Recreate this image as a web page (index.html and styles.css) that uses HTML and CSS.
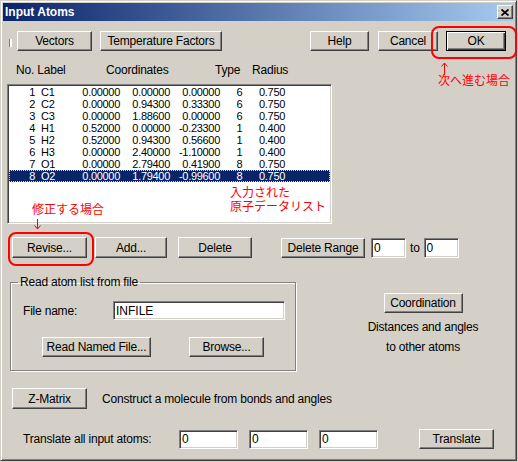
FILE: index.html
```html
<!DOCTYPE html>
<html lang="en">
<head>
    <meta charset="UTF-8">
    <title>Input Atoms</title>
    <link rel="stylesheet" href="styles.css">
</head>
<body>
<div class="window">
    <div class="titlebar">
        <span class="title">Input Atoms</span>
        <button class="close-btn">
            <svg width="8" height="7" viewBox="0 0 8 7"><path d="M0.5 0.5 L7.5 6.5 M7.5 0.5 L0.5 6.5" stroke="#000" stroke-width="1.7" fill="none"/></svg>
        </button>
    </div>

    <div class="toolbar">
        <span class="grip"></span>
        <button class="btn btn-vectors">Vectors</button>
        <button class="btn btn-temp">Temperature Factors</button>
        <button class="btn btn-help">Help</button>
        <button class="btn btn-cancel">Cancel</button>
        <button class="btn btn-ok">OK</button>
    </div>

    <div class="list-head">
        <span>No. Label</span>
        <span>Coordinates</span>
        <span>Type</span>
        <span>Radius</span>
    </div>

    <div class="listbox">
        <div class="atom-row"><span>1</span><span>C1</span><span>0.00000</span><span>0.00000</span><span>0.00000</span><span>6</span><span>0.750</span></div>
        <div class="atom-row"><span>2</span><span>C2</span><span>0.00000</span><span>0.94300</span><span>0.33300</span><span>6</span><span>0.750</span></div>
        <div class="atom-row"><span>3</span><span>C3</span><span>0.00000</span><span>1.88600</span><span>0.00000</span><span>6</span><span>0.750</span></div>
        <div class="atom-row"><span>4</span><span>H1</span><span>0.52000</span><span>0.00000</span><span>-0.23300</span><span>1</span><span>0.400</span></div>
        <div class="atom-row"><span>5</span><span>H2</span><span>0.52000</span><span>0.94300</span><span>0.56600</span><span>1</span><span>0.400</span></div>
        <div class="atom-row"><span>6</span><span>H3</span><span>0.00000</span><span>2.40000</span><span>-1.10000</span><span>1</span><span>0.400</span></div>
        <div class="atom-row"><span>7</span><span>O1</span><span>0.00000</span><span>2.79400</span><span>0.41900</span><span>8</span><span>0.750</span></div>
        <div class="atom-row selected"><span>8</span><span>O2</span><span>0.00000</span><span>1.79400</span><span>-0.99600</span><span>8</span><span>0.750</span></div>
    </div>

    <div class="edit-row">
        <button class="btn btn-revise">Revise...</button>
        <button class="btn btn-add">Add...</button>
        <button class="btn btn-delete">Delete</button>
        <button class="btn btn-range">Delete Range</button>
        <input class="field range-field" value="0">
        <span class="to-label">to</span>
        <input class="field range-field" value="0">
    </div>

    <div class="lower">
        <fieldset class="group">
            <legend>Read atom list from file</legend>
            <div class="file-row">
                <span class="file-label">File name:</span>
                <input class="field file-field" value="INFILE">
            </div>
            <div class="read-row">
                <button class="btn btn-read">Read Named File...</button>
                <button class="btn btn-browse">Browse...</button>
            </div>
        </fieldset>
        <div class="coord">
            <button class="btn btn-coord">Coordination</button>
            <div class="coord-text">Distances and angles</div>
            <div class="coord-text">to other atoms</div>
        </div>
    </div>

    <div class="z-row">
        <button class="btn btn-z">Z-Matrix</button>
        <span class="z-text">Construct a molecule from bonds and angles</span>
    </div>

    <div class="t-row">
        <span class="t-label">Translate all input atoms:</span>
        <input class="field t-field" value="0">
        <input class="field t-field" value="0">
        <input class="field t-field" value="0">
        <button class="btn btn-translate">Translate</button>
    </div>

    <!-- red notes drawn over the dialog -->
    <div class="note-ring ring-ok"></div>
    <div class="note-ring ring-revise"></div>
    <svg class="arrow arrow-up" width="7" height="13" viewBox="0 0 7 13"><path d="M3.5 1 V13 M0.5 4.5 L3.5 1 L6.5 4.5" stroke="#ff0000" stroke-width="1" fill="none"/></svg>
    <div class="note note-ok">次へ進む場合</div>
    <div class="note note-list">入力された<br>原子データリスト</div>
    <div class="note note-revise">修正する場合</div>
    <svg class="arrow arrow-down" width="7" height="11" viewBox="0 0 7 11"><path d="M3.5 0 V10 M0.5 6.5 L3.5 10 L6.5 6.5" stroke="#ff0000" stroke-width="1" fill="none"/></svg>
</div>
</body>
</html>
```

FILE: styles.css
```css
body{
    margin:0;
    background-color:#d4d0c8;
    font-family:"Liberation Sans", Arial, sans-serif;
    font-size:12px;
    letter-spacing:-0.2px;
    color:#000;
}
.window{
    position:relative;
    width:517px;
    height:461px;
    box-sizing:border-box;
    border:1px solid;
    border-color:#d4d0c8 #404040 #404040 #d4d0c8;
    box-shadow:inset 1px 1px #fff, inset -1px -1px #808080;
    padding:2px;
    background-color:#d4d0c8;
}
.titlebar{
    height:18px;
    display:flex;
    align-items:center;
    background:linear-gradient(to right, #0a246a, #a6caf0);
}
.title{
    color:white;
    font-weight:bold;
    letter-spacing:0;
    padding-left:2px;
    flex:1;
}
.close-btn{
    width:16px;
    height:14px;
    margin-right:1px;
    padding:0;
    display:flex;
    align-items:center;
    justify-content:center;
    background-color:#d4d0c8;
    border:1px solid;
    border-color:#fff #404040 #404040 #fff;
    box-shadow:inset -1px -1px #808080;
    box-sizing:border-box;
}

/* buttons and fields */
.btn{
    height:20px;
    padding:0;
    box-sizing:border-box;
    font-family:inherit;
    font-size:12px;
    letter-spacing:-0.2px;
    color:#000;
    background-color:#d4d0c8;
    border:1px solid;
    border-color:#fff #404040 #404040 #fff;
    box-shadow:inset -1px -1px #808080;
}
.field{
    height:19px;
    box-sizing:border-box;
    margin:0;
    padding:0 2px;
    font-family:inherit;
    font-size:12px;
    color:#000;
    background-color:#fff;
    border:1px solid;
    border-color:#808080 #fff #fff #808080;
    box-shadow:inset 1px 1px #404040, inset -1px -1px #d4d0c8;
    outline:none;
}

.toolbar{
    display:flex;
    align-items:center;
    height:20px;
    margin-top:10px;
    padding-right:8px;
}
.grip{
    width:2px;
    height:8px;
    margin:4px 0 0 6px;
    border-left:1px solid #808080;
    background-color:#fff;
}
.btn-vectors{ width:75px; margin-left:5px; }
.btn-temp{ width:122px; margin-left:8px; }
.btn-help{ width:59px; margin-left:auto; }
.btn-cancel{ width:60px; margin-left:9px; }
.btn-ok{
    width:60px;
    margin-left:8px;
    border:1px solid #000;
    box-shadow:inset 1px 1px #fff, inset -1px -1px #404040, inset -2px -2px #808080;
}

.list-head{
    display:grid;
    grid-template-columns:90px 109px 37px auto;
    line-height:14px;
    margin-top:12px;
    padding-left:13px;
}

.listbox{
    width:325px;
    height:140px;
    margin:7px 0 0 4px;
    box-sizing:border-box;
    padding:1px;
    background-color:#fff;
    border:1px solid;
    border-color:#808080 #fff #fff #808080;
    box-shadow:inset 1px 1px #404040, inset -1px -1px #d4d0c8;
}
.atom-row{
    display:grid;
    grid-template-columns:26px 40px 45px 50px 50px 39px 25px;
    height:12px;
    line-height:12px;
    font-size:11px;
    letter-spacing:-0.3px;
    white-space:nowrap;
}
.atom-row span{ text-align:right; }
.atom-row span:nth-child(2){ text-align:left; padding-left:6px; }
.atom-row span:nth-child(6){ text-align:center; }
.selected{
    background-color:#0a246a;
    color:white;
    outline:1px dotted #e0d8a0;
    outline-offset:-1px;
}

.edit-row{
    display:flex;
    align-items:center;
    margin-top:13px;
    padding-left:9px;
}
.edit-row .btn{ height:21px; }
.btn-revise{ width:75px; }
.btn-add{ width:72px; margin-left:8px; }
.btn-delete{ width:74px; margin-left:11px; }
.edit-row .btn-range{ width:84px; height:20px; margin-left:29px; }
.range-field{ width:35px; height:20px; }
.range-field:first-of-type{ margin-left:6px; }
.to-label{ margin:0 4px; }

.lower{
    display:flex;
    align-items:flex-start;
    margin-top:17px;
}
.group{
    width:286px;
    min-width:0;
    box-sizing:border-box;
    margin:0 0 0 7px;
    padding:0 0 13px 0;
    border:1px solid #808080;
    box-shadow:inset 1px 1px #fff, 1px 1px #fff;
}
.group legend{
    margin-left:7px;
    padding:0 2px;
    line-height:14px;
}
.file-row{
    display:flex;
    align-items:center;
    margin-top:12px;
    padding-left:12px;
}
.file-label{ width:90px; }
.file-field{ width:172px; }
.read-row{
    display:flex;
    margin-top:17px;
    padding-left:31px;
}
.btn-read{ width:109px; }
.btn-browse{ width:75px; margin-left:38px; }

.coord{
    display:flex;
    flex-direction:column;
    align-items:center;
    width:160px;
    margin-left:47px;
    padding-top:18px;
}
.btn-coord{ width:79px; margin-bottom:4px; }
.coord-text{ line-height:20px; }

.z-row{
    display:flex;
    align-items:center;
    margin-top:17px;
    padding-left:9px;
}
.btn-z{ width:75px; height:21px; }
.z-text{ margin-left:15px; }

.t-row{
    display:flex;
    align-items:center;
    height:20px;
    margin-top:20px;
    padding-left:20px;
}
.t-label{ width:156px; }
.t-field{ width:59px; margin-right:11px; }
.btn-translate{ width:75px; margin-left:30px; }

/* annotations */
.note{
    position:absolute;
    color:#ff0000;
    font-family:"Liberation Sans", "Noto Sans CJK JP", sans-serif;
    font-size:12px;
    line-height:13px;
    letter-spacing:0;
    white-space:nowrap;
}
.note-list{ line-height:13.5px; }
.note-ring{
    position:absolute;
    border:2px solid #ff0000;
    border-radius:8px;
    box-sizing:border-box;
}
.arrow{ position:absolute; }
.ring-ok{ left:430px; top:25px; width:86px; height:33px; }
.ring-revise{ left:7px; top:231px; width:86px; height:34px; }
.arrow-up{ left:440px; top:61px; }
.note-ok{ left:437px; top:74px; }
.note-list{ left:229px; top:186px; }
.note-revise{ left:31px; top:203px; }
.arrow-down{ left:33px; top:218px; }
```
